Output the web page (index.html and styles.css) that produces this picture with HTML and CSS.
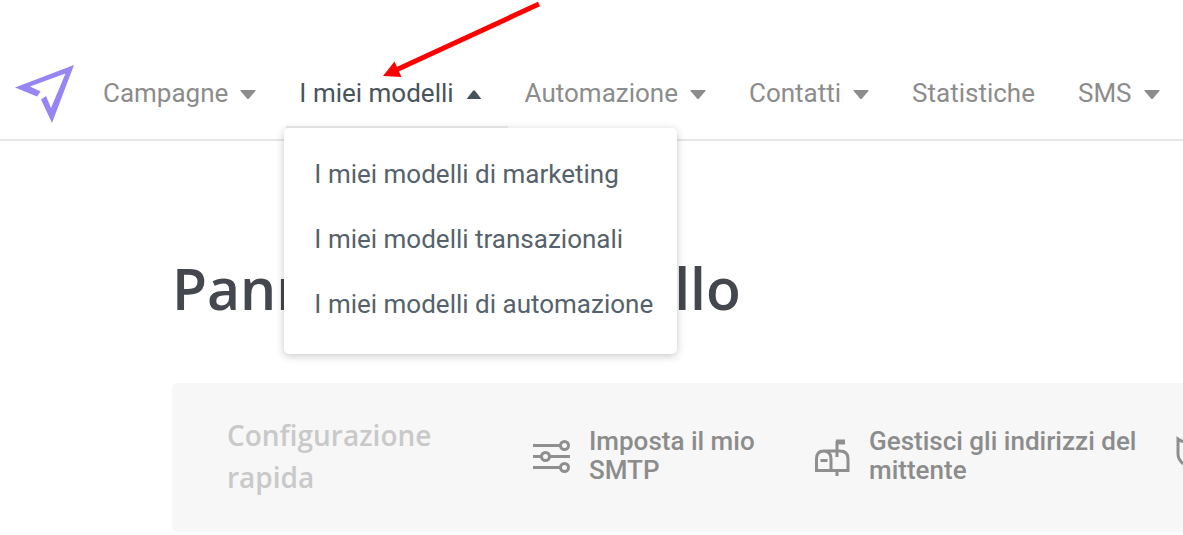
FILE: index.html
```html
<!DOCTYPE html>
<html lang="it">
<head>
<meta charset="utf-8">
<meta name="viewport" content="width=device-width, initial-scale=1">
<title>Pannello di controllo</title>
<link rel="stylesheet" href="styles.css">
</head>
<body>
<header class="topbar">
  <a class="logo" href="#" aria-label="Home">
    <svg width="60" height="60" viewBox="0 0 60 60" fill="#9785f3"><path fill-rule="evenodd" d="M59 1 37 59 26 35.500 31 32 36 44 50.500 9.500 15 22.500 25.500 27.500 22 32.500 0 23.500Z"/></svg>
  </a>
  <nav aria-label="Principale">
    <ul class="nav">
      <li><button class="nav-item" type="button">Campagne<svg class="caret" viewBox="0 0 16 10"><path d="M1 0h14q1.200 0 .4 1L9 8.500q-1 1-2 0L.6 1Q-.2 0 1 0Z"/></svg></button></li>
      <li class="open">
        <button class="nav-item active" type="button" aria-expanded="true">I miei modelli<svg class="caret" viewBox="0 0 16 10"><path d="M.6 9h14.800L9 .8q-1-1-2 0Z"/></svg></button>
        <ul class="menu">
          <li><a href="#">I miei modelli di marketing</a></li>
          <li><a href="#">I miei modelli transazionali</a></li>
          <li><a href="#">I miei modelli di automazione</a></li>
        </ul>
      </li>
      <li><button class="nav-item" type="button">Automazione<svg class="caret" viewBox="0 0 16 10"><path d="M1 0h14q1.200 0 .4 1L9 8.500q-1 1-2 0L.6 1Q-.2 0 1 0Z"/></svg></button></li>
      <li><button class="nav-item" type="button">Contatti<svg class="caret" viewBox="0 0 16 10"><path d="M1 0h14q1.200 0 .4 1L9 8.500q-1 1-2 0L.6 1Q-.2 0 1 0Z"/></svg></button></li>
      <li><a class="nav-item" href="#">Statistiche</a></li>
      <li><button class="nav-item" type="button">SMS<svg class="caret" viewBox="0 0 16 10"><path d="M1 0h14q1.200 0 .4 1L9 8.500q-1 1-2 0L.6 1Q-.2 0 1 0Z"/></svg></button></li>
    </ul>
  </nav>
</header>
<main>
  <h1>Pannello di controllo</h1>
  <section class="setup">
    <h2>Configurazione rapida</h2>
    <a class="task" href="#">
      <svg width="40" height="36" viewBox="0 0 40 36" fill="none" stroke="#8f8f8f" stroke-width="3"><path d="M1 7.500h27M1 18.500h8M18 18.500h20M1 29.500h27"/><circle cx="32.500" cy="7.500" r="4"/><circle cx="13.500" cy="18.500" r="4"/><circle cx="32.500" cy="29.500" r="4"/></svg>
      <span>Imposta il mio SMTP</span>
    </a>
    <a class="task sender" href="#">
      <svg width="36" height="40" viewBox="0 0 36 40" fill="none" stroke="#8f8f8f" stroke-width="3"><path d="M9 15H26Q34 15 34 23V34.500H2.500V23Q2.500 15 9.500 15 17 15 17 23V34.500M23 21V5M23 34.500V40"/><path d="M22 6h9" stroke-width="5"/><path d="M6.500 24.500h7"/></svg>
      <span>Gestisci gli indirizzi del mittente</span>
    </a>
    <a class="task" href="#" aria-label="Protezione">
      <svg width="32" height="40" viewBox="0 0 32 40" fill="none" stroke="#8f8f8f" stroke-width="3"><path d="M2 3Q10 9 16 2 22 9 30 3V18Q30 27 16 33 2 27 2 18Z"/></svg>
    </a>
  </section>
</main>
<svg class="pointer" width="160" height="80" viewBox="0 0 160 80" aria-hidden="true"><path d="M158 4 15 70" stroke="#fe0000" stroke-width="5"/><path d="M2 76 13.500 61.500 20.500 77Z" fill="#fe0000"/></svg>
</body>
</html>
```
FILE: styles.css
```css
* {
  box-sizing: border-box;
}

body {
  position: relative;
  margin: 0;
  overflow-x: hidden;
  background: #fff;
  font-family: Roboto, "Liberation Sans", sans-serif;
  font-size: 26px;
  color: #8c8c8c;
}

a {
  color: inherit;
  text-decoration: none;
}

ul {
  margin: 0;
  padding: 0;
  list-style: none;
}

.topbar {
  display: flex;
  align-items: center;
  gap: 28px;
  padding: 48px 0 0 15px;
  height: 141px;
  border-bottom: 2px solid #e6e6e6;
}

.logo,
.nav {
  display: flex;
  align-items: center;
}

.nav {
  gap: 43px;
  padding-bottom: 2px;
}

.nav-item {
  display: flex;
  align-items: center;
  gap: 12px;
  padding: 0;
  border: 0;
  background: none;
  font: inherit;
  line-height: 32px;
  color: inherit;
  white-space: nowrap;
}

.nav-item.active {
  color: #48545c;
}

.caret {
  width: 16px;
  height: 10px;
  margin-top: 4px;
  fill: currentColor;
}

.open {
  position: relative;
}

.menu {
  position: absolute;
  z-index: 2;
  top: 51px;
  left: -15px;
  padding: 14px 24px 17px 30px;
  border-radius: 5px;
  background: #fff;
  box-shadow: 0 2px 8px rgba(0, 0, 0, 0.22);
  line-height: 65px;
  color: #56626b;
  white-space: nowrap;
}

.menu::before {
  content: "";
  position: absolute;
  top: -2px;
  left: 2px;
  width: 222px;
  height: 2px;
  background: #e0e0e0;
}

.menu a {
  display: block;
}

main {
  padding: 99px 0 0 172px;
}

h1 {
  margin: 0;
  font: 600 57px/96px "Open Sans", sans-serif;
  color: #44474d;
}

.setup {
  display: flex;
  align-items: center;
  height: 149px;
  margin: 47px 0 2px;
  padding: 0 0 3px 55px;
  border-radius: 5px 0 0 5px;
  overflow: hidden;
  background: #f7f7f7;
}

h2 {
  flex: none;
  width: 305px;
  margin: 0;
  padding-right: 80px;
  font: 600 28px/42px "Open Sans", sans-serif;
  color: #c9c9c9;
}

.task {
  display: flex;
  flex: none;
  align-items: center;
  gap: 17px;
  width: 282px;
  font-size: 26px;
  font-weight: 500;
  line-height: 29px;
}

.task span {
  flex: 1;
  padding-right: 30px;
}

.task svg {
  flex: none;
}

.sender {
  gap: 19px;
  width: 362px;
}

.pointer {
  position: absolute;
  z-index: 3;
  top: 0;
  left: 381px;
}
```
